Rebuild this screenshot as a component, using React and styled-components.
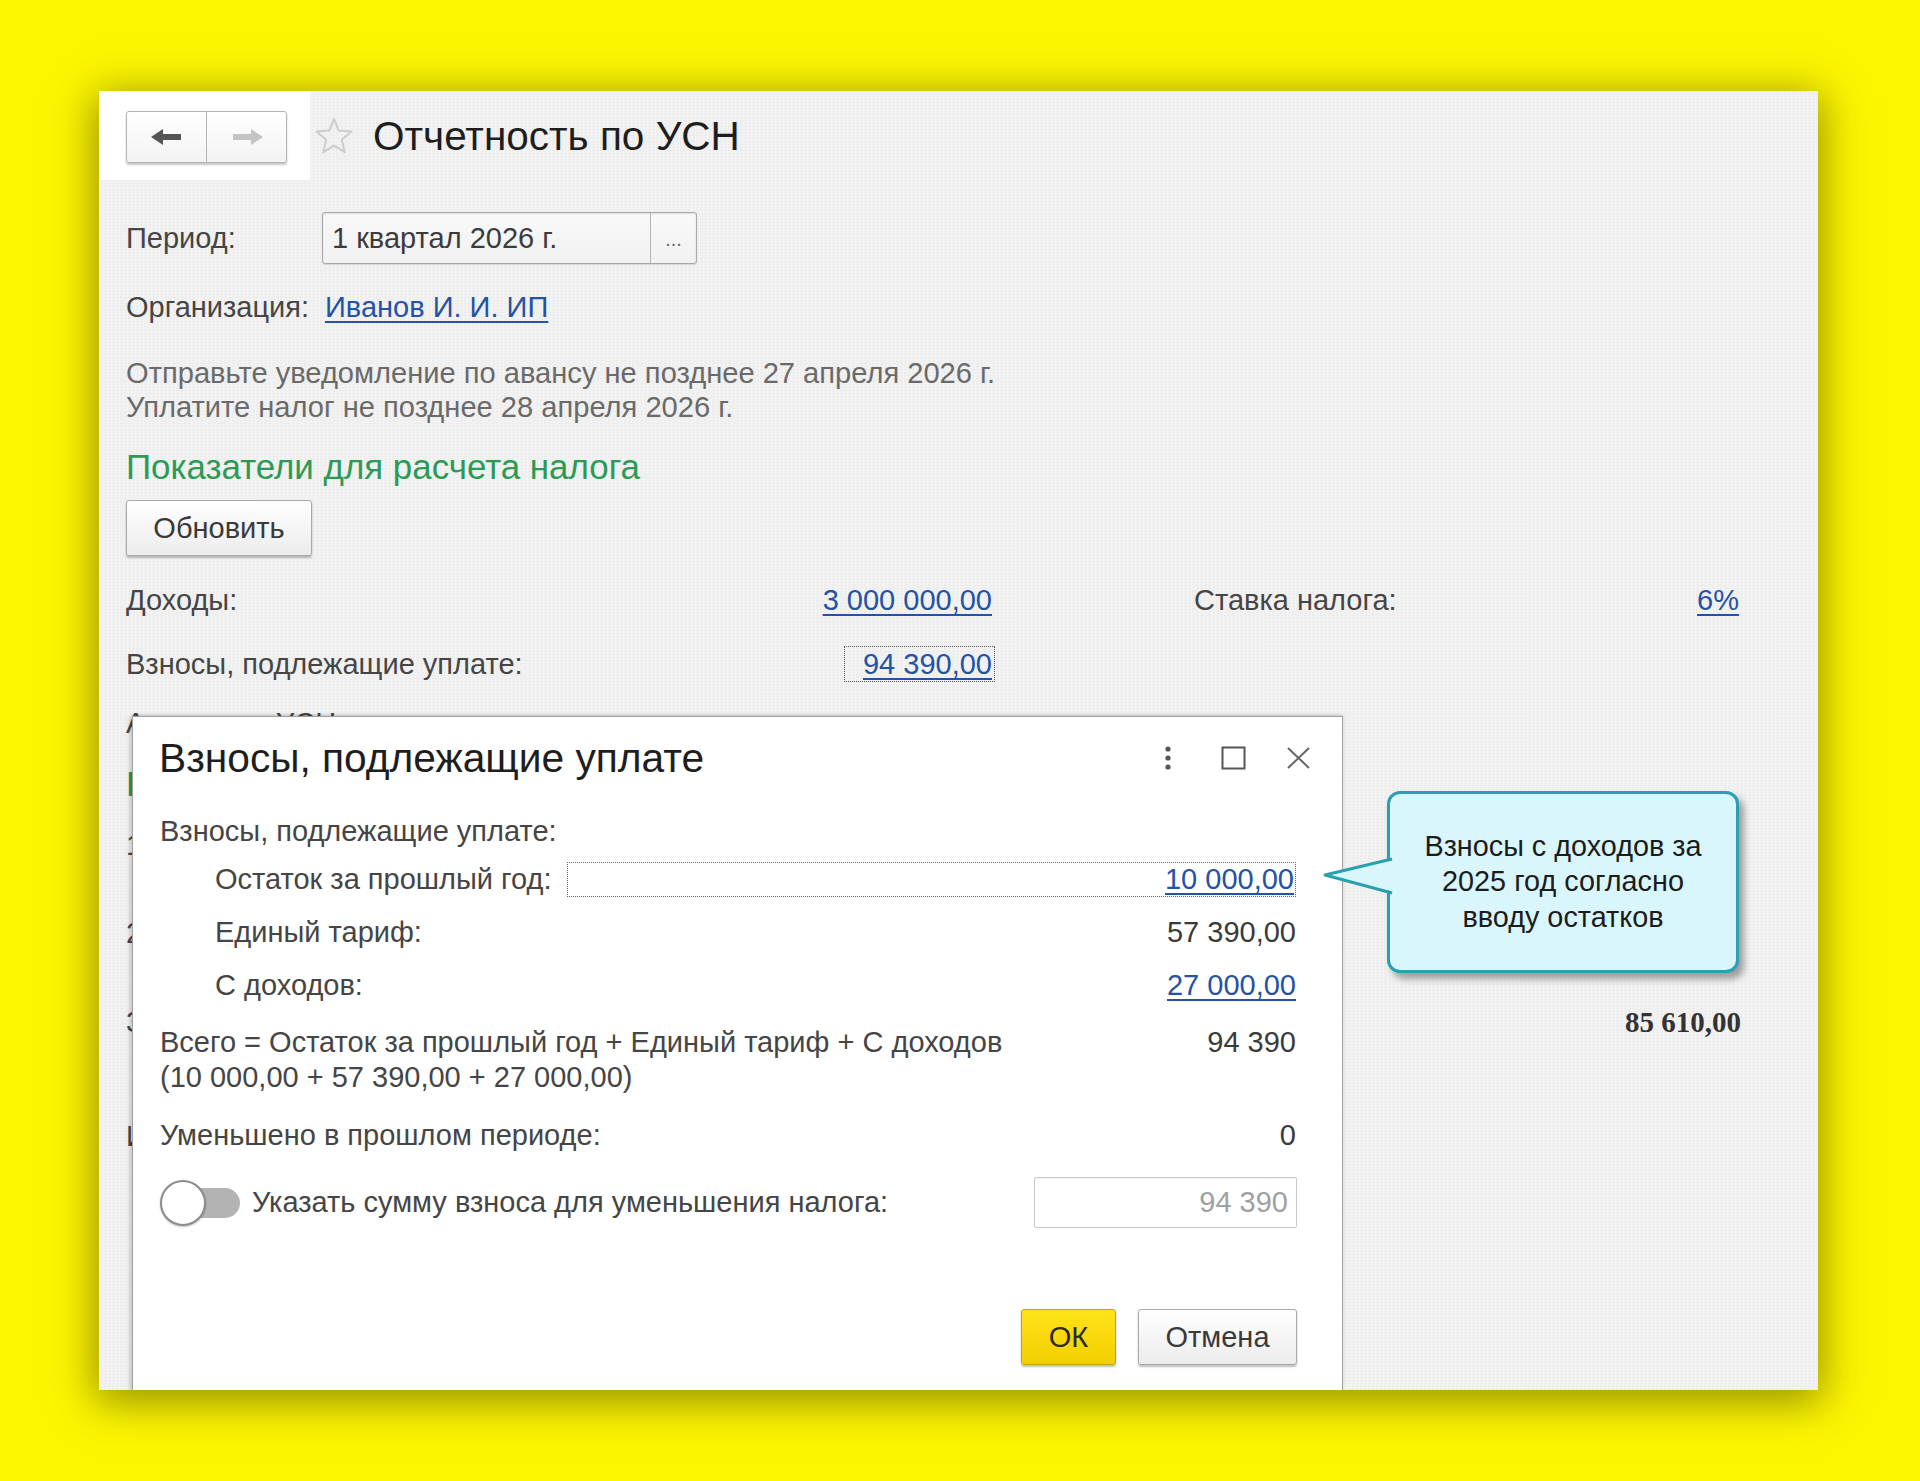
import React from "react";
import styled, { createGlobalStyle } from "styled-components";

const GlobalStyle = createGlobalStyle`
  html, body {
    margin: 0;
    padding: 0;
    background: #fcf600;
  }
  body {
    font-family: "Liberation Sans", Arial, sans-serif;
    width: 1920px;
    height: 1481px;
    overflow: hidden;
  }
`;

const Page = styled.div`
  padding: 91px 0 0 99px;
`;

const Panel = styled.div`
  position: relative;
  width: 1719px;
  height: 1299px;
  overflow: hidden;
  background-color: #f0f0f0;
  background-image: repeating-linear-gradient(
      90deg,
      rgba(255, 255, 255, 0.25) 0 1px,
      transparent 1px 4px
    ),
    repeating-linear-gradient(0deg, rgba(0, 0, 0, 0.012) 0 1px, transparent 1px 3px);
  box-shadow: 0 8px 40px 4px rgba(70, 60, 0, 0.55);
`;

const Header = styled.div`
  display: flex;
  align-items: center;
  height: 89px;
`;

const NavBox = styled.div`
  align-self: stretch;
  box-sizing: border-box;
  width: 211px;
  padding: 20px 0 0 27px;
  background: #ffffff;
`;

const NavGroup = styled.div`
  display: flex;
  width: 161px;
  height: 52px;
  box-sizing: border-box;
  border: 1px solid #b4b4b4;
  border-radius: 3px;
  background: linear-gradient(#ffffff, #f3f3f3);
  box-shadow: 0 2px 2px rgba(0, 0, 0, 0.22);
  overflow: hidden;
`;

const NavBtn = styled.div`
  flex: 1;
  display: flex;
  align-items: center;
  justify-content: center;
  & + & {
    border-left: 1px solid #b4b4b4;
  }
`;

const StarWrap = styled.div`
  display: flex;
  margin-left: 4px;
`;

const Title = styled.h1`
  margin: 0 0 0 19px;
  font-size: 40.5px;
  font-weight: normal;
  color: #1e1e1e;
  line-height: 44px;
`;

const Body = styled.div`
  display: flex;
  flex-direction: column;
  padding: 0 27px;
`;

const FieldRow = styled.div`
  display: flex;
  align-items: center;
  height: ${(p) => p.$h || 40}px;
  margin-top: ${(p) => p.$top || 0}px;
  font-size: 29px;
  color: #454545;
`;

const Label = styled.span`
  width: ${(p) => (p.$w ? p.$w + "px" : "auto")};
  margin-right: ${(p) => p.$gap || 0}px;
  white-space: nowrap;
`;

const PeriodInput = styled.div`
  display: flex;
  width: 375px;
  height: 52px;
  box-sizing: border-box;
  border: 1px solid #a8a8a8;
  border-radius: 3px;
  background: linear-gradient(#f9f9f9, #f1f1f1);
  box-shadow: inset 0 1px 2px rgba(0, 0, 0, 0.12), 0 1px 1px rgba(0, 0, 0, 0.1);
`;

const PeriodText = styled.div`
  flex: 1;
  display: flex;
  align-items: center;
  padding-left: 9px;
  color: #3c3c3c;
`;

const PeriodBtn = styled.div`
  width: 46px;
  display: flex;
  align-items: flex-end;
  justify-content: center;
  padding-bottom: 12px;
  box-sizing: border-box;
  border-left: 1px solid #b4b4b4;
  font-size: 20px;
  color: #666;
`;

const Link = styled.span`
  color: #2452a5;
  text-decoration: underline;
  text-underline-offset: 4px;
  text-decoration-thickness: 2px;
  white-space: nowrap;
`;

const Notice = styled.div`
  margin-top: 29px;
  font-size: 29.1px;
  line-height: 34px;
  color: #6a6a6a;
`;

const Section = styled.div`
  margin-top: ${(p) => p.$top}px;
  height: 40px;
  line-height: 40px;
  font-size: 34.9px;
  color: #2c9a55;
  white-space: nowrap;
`;

const Button = styled.button`
  box-sizing: border-box;
  width: ${(p) => p.$w}px;
  height: 56px;
  margin-top: ${(p) => p.$top || 0}px;
  padding: 0;
  border: 1px solid ${(p) => (p.$primary ? "#c4a600" : "#a9a9a9")};
  border-radius: 3px;
  background: ${(p) =>
    p.$primary
      ? "linear-gradient(#ffe31a, #f3cf00)"
      : "linear-gradient(#ffffff, #ececec)"};
  box-shadow: 0 2px 2px rgba(0, 0, 0, 0.25);
  font-family: "Liberation Sans", Arial, sans-serif;
  font-size: 29px;
  color: ${(p) => (p.$primary ? "#2a2a2a" : "#3a3a3a")};
`;

const ValueRow = styled.div`
  display: grid;
  grid-template-columns: 866px 202px 545px;
  align-items: center;
  height: 40px;
  margin-top: ${(p) => p.$top}px;
  font-size: 29px;
  color: #454545;
  white-space: nowrap;
`;

const Cell = styled.div`
  grid-column: ${(p) => p.$col};
  display: flex;
  align-items: center;
  justify-content: space-between;
`;

const FocusBox = styled.span`
  display: inline-flex;
  align-items: center;
  height: 34px;
  padding: 0 2px 0 18px;
  border: 1px dotted #555;
  margin-right: -3px;
`;

const BoldSerif = styled.span`
  font-family: "Liberation Serif", "Times New Roman", serif;
  font-weight: bold;
  font-size: 29px;
  color: #333;
  margin-right: -2px;
`;

const Dialog = styled.div`
  position: absolute;
  left: 33px;
  top: 625px;
  bottom: 0;
  width: 1211px;
  box-sizing: border-box;
  background: #ffffff;
  border: 1px solid #a0a0a0;
  border-bottom: none;
  box-shadow: -3px 0 4px rgba(0, 0, 0, 0.12), 0 -1px 3px rgba(0, 0, 0, 0.15);
  display: flex;
  flex-direction: column;
`;

const DialogHead = styled.div`
  display: flex;
  align-items: center;
  height: 44px;
  margin-top: 19px;
  padding: 0 31px 0 26px;
`;

const DialogTitle = styled.div`
  flex: 1;
  font-size: 40.7px;
  color: #1e1e1e;
  white-space: nowrap;
`;

const HeadIcons = styled.div`
  display: flex;
  align-items: center;
`;

const IconSlot = styled.div`
  display: flex;
  margin-left: ${(p) => p.$gap || 0}px;
`;

const DialogBody = styled.div`
  display: flex;
  flex-direction: column;
  padding: 0 46px 0 27px;
  font-size: 29px;
  color: #454545;
`;

const DRow = styled.div`
  display: flex;
  align-items: center;
  justify-content: space-between;
  height: 40px;
  margin-top: ${(p) => p.$top || 0}px;
  padding-left: ${(p) => p.$indent || 0}px;
  white-space: nowrap;
`;

const SubLabel = styled.span`
  width: 352px;
  flex-shrink: 0;
`;

const DottedField = styled.div`
  flex: 1;
  height: 35px;
  box-sizing: border-box;
  display: flex;
  align-items: center;
  justify-content: flex-end;
  padding-right: 1px;
  border: 1px dotted #666;
`;

const Plain = styled.span`
  color: #3a3a3a;
`;

const Total = styled.div`
  display: flex;
  justify-content: space-between;
  margin-top: 20px;
  line-height: 35px;
`;

const ToggleRow = styled.div`
  display: flex;
  align-items: center;
  margin-top: 22px;
  height: 51px;
`;

const Toggle = styled.div`
  position: relative;
  width: 80px;
  height: 46px;
  flex-shrink: 0;
`;

const Track = styled.div`
  position: absolute;
  left: 20px;
  right: 0;
  top: 8px;
  height: 30px;
  border-radius: 15px;
  background: #b3b3b3;
`;

const Knob = styled.div`
  position: absolute;
  left: 0;
  top: 0;
  width: 46px;
  height: 46px;
  box-sizing: border-box;
  border-radius: 50%;
  border: 2px solid #8c8c8c;
  background: #ffffff;
  box-shadow: 0 1px 2px rgba(0, 0, 0, 0.25);
`;

const ToggleLabel = styled.span`
  flex: 1;
  margin-left: 12px;
  white-space: nowrap;
`;

const SumInput = styled.div`
  width: 263px;
  height: 51px;
  box-sizing: border-box;
  display: flex;
  align-items: center;
  justify-content: flex-end;
  padding-right: 8px;
  border: 1px solid #c8c8c8;
  border-radius: 2px;
  box-shadow: inset 0 1px 1px rgba(0, 0, 0, 0.06);
  color: #a0a0a0;
  margin-right: -1px;
`;

const Actions = styled.div`
  display: flex;
  justify-content: flex-end;
  gap: 22px;
  margin-top: 81px;
  margin-right: -1px;
`;

const Callout = styled.div`
  position: absolute;
  left: 1288px;
  top: 700px;
  width: 352px;
  height: 182px;
  box-sizing: border-box;
  border: 3px solid #2a9fb2;
  border-radius: 13px;
  background: #d9f6fc;
  box-shadow: 5px 6px 7px rgba(0, 0, 0, 0.35);
  display: flex;
  align-items: center;
  justify-content: center;
  text-align: center;
  font-size: 28.8px;
  line-height: 35.5px;
  color: #1c1c1c;
`;

const Tail = styled.svg`
  position: absolute;
  left: -68px;
  top: 61px;
`;

const ArrowLeft = () => (
  <svg width="32" height="16" viewBox="0 0 32 16">
    <polygon points="0,8 12,0 12,5 30,5 30,11 12,11 12,16" fill="#555" />
  </svg>
);

const ArrowRight = () => (
  <svg width="32" height="16" viewBox="0 0 32 16">
    <polygon points="32,8 20,0 20,5 2,5 2,11 20,11 20,16" fill="#c4c4c4" />
  </svg>
);

const Star = () => (
  <svg width="40" height="40" viewBox="0 0 40 40">
    <polygon
      points="20,3 24.8,14.6 37.5,15.6 27.8,23.8 30.8,36.2 20,29.6 9.2,36.2 12.2,23.8 2.5,15.6 15.2,14.6"
      fill="none"
      stroke="#cdcdcd"
      strokeWidth="2"
      strokeLinejoin="round"
    />
  </svg>
);

const Kebab = () => (
  <svg width="10" height="26" viewBox="0 0 10 26">
    <circle cx="5" cy="4" r="2.6" fill="#555" />
    <circle cx="5" cy="13" r="2.6" fill="#555" />
    <circle cx="5" cy="22" r="2.6" fill="#555" />
  </svg>
);

const Maximize = () => (
  <svg width="25" height="24" viewBox="0 0 25 24">
    <rect x="1.5" y="1.5" width="22" height="21" fill="none" stroke="#555" strokeWidth="2" />
  </svg>
);

const Close = () => (
  <svg width="25" height="24" viewBox="0 0 25 24">
    <path d="M2 2 L23 22 M23 2 L2 22" stroke="#666" strokeWidth="2" />
  </svg>
);

export default function App() {
  return (
    <>
      <GlobalStyle />
      <Page>
        <Panel>
          <Header>
            <NavBox>
              <NavGroup>
                <NavBtn>
                  <ArrowLeft />
                </NavBtn>
                <NavBtn>
                  <ArrowRight />
                </NavBtn>
              </NavGroup>
            </NavBox>
            <StarWrap>
              <Star />
            </StarWrap>
            <Title>Отчетность по УСН</Title>
          </Header>

          <Body>
            <FieldRow $h={52} $top={32}>
              <Label $w={196}>Период:</Label>
              <PeriodInput>
                <PeriodText>1 квартал 2026 г.</PeriodText>
                <PeriodBtn>...</PeriodBtn>
              </PeriodInput>
            </FieldRow>
            <FieldRow $top={23}>
              <Label $gap={16}>Организация:</Label>
              <Link>Иванов И. И. ИП</Link>
            </FieldRow>
            <Notice>
              Отправьте уведомление по авансу не позднее 27 апреля 2026 г.
              <br />
              Уплатите налог не позднее 28 апреля 2026 г.
            </Notice>
            <Section $top={23}>Показатели для расчета налога</Section>
            <Button $w={186} $top={13}>
              Обновить
            </Button>
            <ValueRow $top={24}>
              <Cell $col={1}>
                <span>Доходы:</span>
                <Link>3 000 000,00</Link>
              </Cell>
              <Cell $col={3}>
                <span>Ставка налога:</span>
                <Link>6%</Link>
              </Cell>
            </ValueRow>
            <ValueRow $top={24}>
              <Cell $col={1}>
                <span>Взносы, подлежащие уплате:</span>
                <FocusBox>
                  <Link>94 390,00</Link>
                </FocusBox>
              </Cell>
            </ValueRow>
            <ValueRow $top={19}>
              <Cell $col={1}>
                <span>Авансы по УСН</span>
              </Cell>
            </ValueRow>
            <Section $top={21}>Р</Section>
            <ValueRow $top={21}>
              <Cell $col={1}>
                <span>1.</span>
              </Cell>
            </ValueRow>
            <ValueRow $top={48}>
              <Cell $col={1}>
                <span>2.</span>
              </Cell>
            </ValueRow>
            <ValueRow $top={49}>
              <Cell $col={1}>
                <span>3.</span>
              </Cell>
              <Cell $col={3}>
                <span />
                <BoldSerif>85 610,00</BoldSerif>
              </Cell>
            </ValueRow>
            <ValueRow $top={74}>
              <Cell $col={1}>
                <span>И</span>
              </Cell>
            </ValueRow>
          </Body>

          <Dialog>
            <DialogHead>
              <DialogTitle>Взносы, подлежащие уплате</DialogTitle>
              <HeadIcons>
                <IconSlot>
                  <Kebab />
                </IconSlot>
                <IconSlot $gap={48}>
                  <Maximize />
                </IconSlot>
                <IconSlot $gap={40}>
                  <Close />
                </IconSlot>
              </HeadIcons>
            </DialogHead>
            <DialogBody>
              <DRow $top={31}>
                <span>Взносы, подлежащие уплате:</span>
              </DRow>
              <DRow $top={8} $indent={55}>
                <SubLabel>Остаток за прошлый год:</SubLabel>
                <DottedField>
                  <Link>10 000,00</Link>
                </DottedField>
              </DRow>
              <DRow $top={13} $indent={55}>
                <span>Единый тариф:</span>
                <Plain>57 390,00</Plain>
              </DRow>
              <DRow $top={13} $indent={55}>
                <span>С доходов:</span>
                <Link>27 000,00</Link>
              </DRow>
              <Total>
                <span>
                  Всего = Остаток за прошлый год + Единый тариф + С доходов
                  <br />
                  (10 000,00 + 57 390,00 + 27 000,00)
                </span>
                <Plain>94 390</Plain>
              </Total>
              <DRow $top={20}>
                <span>Уменьшено в прошлом периоде:</span>
                <Plain>0</Plain>
              </DRow>
              <ToggleRow>
                <Toggle>
                  <Track />
                  <Knob />
                </Toggle>
                <ToggleLabel>Указать сумму взноса для уменьшения налога:</ToggleLabel>
                <SumInput>94 390</SumInput>
              </ToggleRow>
              <Actions>
                <Button $w={95} $primary>
                  ОК
                </Button>
                <Button $w={159}>Отмена</Button>
              </Actions>
            </DialogBody>
          </Dialog>

          <Callout>
            <Tail width="80" height="44" viewBox="0 0 80 44">
              <polygon points="77,3 3,20 77,38" fill="#d9f6fc" />
              <polyline
                points="70,4 3,20 70,38"
                fill="none"
                stroke="#2a9fb2"
                strokeWidth="3"
                strokeLinejoin="round"
              />
            </Tail>
            <div>
              Взносы с доходов за
              <br />
              2025 год согласно
              <br />
              вводу остатков
            </div>
          </Callout>
        </Panel>
      </Page>
    </>
  );
}
